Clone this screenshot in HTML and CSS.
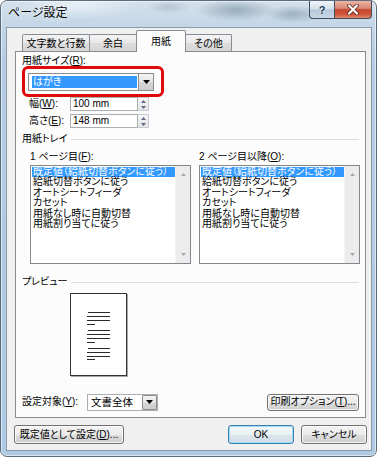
FILE: index.html
```html
<!DOCTYPE html>
<html lang="ja">
<head>
<meta charset="utf-8">
<title>ページ設定</title>
<link rel="stylesheet" href="styles.css">
</head>
<body>
<div class="window">
  <div class="titlebar">
    <span class="title">ページ設定</span>
    <div class="caps">
      <div class="cap help">?</div>
      <div class="cap close">
        <svg width="14" height="11" viewBox="0 0 14 11"><path d="M3 1.5L11 9.5M11 1.5L3 9.5" stroke="#5a2216" stroke-width="3.8" stroke-linecap="round"/><path d="M3 1.5L11 9.5M11 1.5L3 9.5" stroke="#ffffff" stroke-width="2.2" stroke-linecap="round"/></svg>
      </div>
    </div>
  </div>
  <div class="client">
    <div class="tabctl">
      <div class="tabs">
        <div class="tab t1">文字数と行数</div>
        <div class="tab t2">余白</div>
        <div class="tab t3 active">用紙</div>
        <div class="tab t4">その他</div>
      </div>
      <div class="panel">
        <div class="lbl-size">用紙サイズ(<u>R</u>):</div>
        <div class="redbox">
          <div class="combo">
            <div class="hl">はがき</div>
            <div class="dd"><svg width="7" height="4" viewBox="0 0 7 4"><path d="M0 0H7L3.5 4Z" fill="#000"/></svg></div>
          </div>
        </div>
        <div class="spin-row">
          <span class="spin-lbl">幅(<u>W</u>):</span>
          <div class="field">100 mm</div>
          <div class="spin"><svg width="5" height="3" viewBox="0 0 5 3"><path d="M0 3H5L2.5 0Z" fill="#5a6a88"/></svg><svg width="5" height="3" viewBox="0 0 5 3"><path d="M0 0H5L2.5 3Z" fill="#5a6a88"/></svg></div>
        </div>
        <div class="spin-row">
          <span class="spin-lbl">高さ(<u>E</u>):</span>
          <div class="field">148 mm</div>
          <div class="spin"><svg width="5" height="3" viewBox="0 0 5 3"><path d="M0 3H5L2.5 0Z" fill="#5a6a88"/></svg><svg width="5" height="3" viewBox="0 0 5 3"><path d="M0 0H5L2.5 3Z" fill="#5a6a88"/></svg></div>
        </div>
        <div class="group">用紙トレイ</div>
        <div class="tray-labels">
          <span class="tl1">1 ページ目(<u>F</u>):</span>
          <span>2 ページ目以降(<u>O</u>):</span>
        </div>
        <div class="lists">
          <div class="list">
            <div class="items">
              <div class="item sel">既定値（給紙切替ボタンに従う）</div>
              <div class="item">給紙切替ボタンに従う</div>
              <div class="item">オートシートフィーダ</div>
              <div class="item">カセット</div>
              <div class="item">用紙なし時に自動切替</div>
              <div class="item">用紙割り当てに従う</div>
            </div>
            <div class="sb"><svg width="5" height="3" viewBox="0 0 5 3"><path d="M0 3H5L2.5 0Z" fill="#a8a8a8"/></svg><svg width="5" height="3" viewBox="0 0 5 3"><path d="M0 0H5L2.5 3Z" fill="#a8a8a8"/></svg></div>
          </div>
          <div class="list">
            <div class="items">
              <div class="item sel">既定値（給紙切替ボタンに従う）</div>
              <div class="item">給紙切替ボタンに従う</div>
              <div class="item">オートシートフィーダ</div>
              <div class="item">カセット</div>
              <div class="item">用紙なし時に自動切替</div>
              <div class="item">用紙割り当てに従う</div>
            </div>
            <div class="sb"><svg width="5" height="3" viewBox="0 0 5 3"><path d="M0 3H5L2.5 0Z" fill="#a8a8a8"/></svg><svg width="5" height="3" viewBox="0 0 5 3"><path d="M0 0H5L2.5 3Z" fill="#a8a8a8"/></svg></div>
          </div>
        </div>
        <div class="group preview">プレビュー</div>
        <div class="page">
          <svg width="55" height="81" viewBox="0 0 55 81">
            <g fill="#2a2a2a">
              <rect x="17" y="18" width="22" height="1"/>
              <rect x="16" y="22" width="23" height="1"/>
              <rect x="16" y="26" width="23" height="1"/>
              <rect x="16" y="30" width="8" height="1"/>
              <rect x="17" y="36" width="22" height="1"/>
              <rect x="16" y="40" width="23" height="1"/>
              <rect x="16" y="44" width="23" height="1"/>
              <rect x="16" y="48" width="8" height="1"/>
              <rect x="17" y="54" width="22" height="1"/>
              <rect x="16" y="58" width="23" height="1"/>
              <rect x="16" y="62" width="23" height="1"/>
              <rect x="16" y="65" width="8" height="1"/>
            </g>
          </svg>
        </div>
        <div class="target-row">
          <span class="target-lbl">設定対象(<u>Y</u>):</span>
          <div class="combo2">
            <span class="c2text">文書全体</span>
            <div class="dd2"><svg width="7" height="4" viewBox="0 0 7 4"><path d="M0 0H7L3.5 4Z" fill="#000"/></svg></div>
          </div>
          <div class="btn print-btn">印刷オプション(<u>T</u>)...</div>
        </div>
      </div>
    </div>
    <div class="footer">
      <div class="btn def-btn">既定値として設定(<u>D</u>)...</div>
      <div class="btn ok-btn">OK</div>
      <div class="btn cancel-btn">キャンセル</div>
    </div>
  </div>
</div>
</body>
</html>
```

FILE: styles.css
```css
* { box-sizing: border-box; }
html, body { margin: 0; padding: 0; background: #ffffff; }
body {
  font-family: "Liberation Sans", "Noto Sans CJK JP", sans-serif;
  font-size: 10px;
  color: #000;
  font-feature-settings: "palt";
}
u { text-underline-offset: 1px; }

.window {
  width: 377px;
  height: 457px;
  border: 1px solid #5b6c7c;
  border-radius: 7px;
  padding: 0 4px 5px 5px;
  display: flex;
  flex-direction: column;
  box-shadow: inset 0 0 0 1px rgba(255,255,255,0.55);
  background:
    radial-gradient(ellipse 40px 11px at 235px 9px, rgba(110,132,152,0.55), transparent),
    radial-gradient(ellipse 28px 9px at 292px 13px, rgba(110,132,152,0.5), transparent),
    radial-gradient(ellipse 22px 7px at 168px 6px, rgba(130,150,170,0.35), transparent),
    radial-gradient(ellipse 60px 14px at 80px 4px, rgba(255,255,255,0.5), transparent),
    linear-gradient(#d4e1eb, #c2d6e7 26px, #b4cde4 60px, #afc9e2);
}

.titlebar {
  height: 26px;
  display: flex;
  align-items: flex-start;
}
.title {
  font-size: 12px;
  line-height: 14px;
  margin: 5px 0 0 2px;
  text-shadow: 0 0 6px rgba(255,255,255,0.9);
}
.caps {
  display: flex;
  margin-left: auto;
}
.cap {
  height: 18px;
  border: 1px solid #3e4e60;
  border-top: 0;
  display: flex;
  align-items: center;
  justify-content: center;
}
.help {
  width: 26px;
  border-radius: 0 0 0 4px;
  background: linear-gradient(#eef3f8, #d6e1eb 45%, #b6c8da 52%, #c9d8e6);
  font-weight: bold;
  font-size: 11px;
  color: #223a55;
  text-shadow: 0 0 2px #fff;
}
.close {
  width: 38px;
  margin-left: -1px;
  border-radius: 0 0 4px 0;
  background: linear-gradient(#ebb4a6, #d98a75 42%, #c4472d 52%, #cf5439 78%, #e08a6f);
}

.client {
  flex: 1;
  border: 1px solid #8a9bab;
  background: #f0f0f0;
  display: flex;
  flex-direction: column;
  padding: 0 4px 0 7px;
}

.tabctl { margin: 0 1px 0 1px; }
.tabs {
  height: 23px;
  display: flex;
  align-items: flex-end;
  padding: 2px 0 0 7px;
}
.tab {
  height: 17px;
  border: 1px solid #898c95;
  border-bottom: 0;
  border-radius: 2px 2px 0 0;
  background: linear-gradient(#f4f4f4, #e8e8e8 50%, #dcdcdc 52%, #d7d7d7);
  text-align: center;
  line-height: 12px;
  padding-top: 3px;
  white-space: nowrap;
}
.t1 { width: 68px; }
.t2 { width: 48px; margin-left: -1px; }
.t3 { width: 50px; margin-left: -1px; }
.t4 { width: 47px; margin-left: -1px; }
.tab.active {
  height: 22px;
  margin-bottom: -1px;
  background: #fcfcfc;
  position: relative;
  z-index: 1;
  padding-top: 5px;
}

.panel {
  height: 367px;
  border: 1px solid #898c95;
  background: #fcfcfc;
}

.lbl-size {
  margin: 3px 0 0 6px;
  line-height: 12px;
  height: 12px;
}
.redbox {
  margin: -1px 0 0 6px;
  width: 142px;
  height: 31px;
  border: 3px solid #e10a0a;
  border-radius: 6px;
  padding: 4px 0 0 3px;
}
.combo {
  width: 126px;
  height: 18px;
  border: 1px solid #8c8c8c;
  background: #fff;
  display: flex;
}
.hl {
  flex: 1;
  margin: 2px 1px 2px 3px;
  background: #3399ff;
  color: #fff;
  line-height: 12px;
  padding-left: 1px;
}
.dd {
  width: 15px;
  border-left: 1px solid #8c8c8c;
  background: linear-gradient(#f3f3f3, #e6e6e6 50%, #d6d6d6 52%, #cdcdcd);
  display: flex;
  align-items: center;
  justify-content: center;
}

.spin-row {
  display: flex;
  align-items: center;
  height: 14px;
  margin-left: 13px;
}
.spin-row + .spin-row { margin-top: 3px; }
.spin-lbl { width: 41px; line-height: 12px; }
.field {
  width: 68px;
  height: 14px;
  border: 1px solid #abadb3;
  background: #fff;
  line-height: 12px;
  padding-left: 2px;
}
.spin {
  width: 11px;
  height: 14px;
  border: 1px solid #c9cbd0;
  border-left: 0;
  background: linear-gradient(#f6f6f6, #e4e4e4);
  display: flex;
  flex-direction: column;
  align-items: center;
  justify-content: space-around;
}

.group {
  display: flex;
  align-items: center;
  margin: 5px 0 0 6px;
  line-height: 12px;
  height: 12px;
}
.group::after {
  content: "";
  flex: 1;
  height: 1px;
  background: #d5dfe5;
  margin: 0 6px 0 4px;
}
.group.preview { margin-top: 12px; }

.tray-labels {
  display: flex;
  margin: 6px 0 0 14px;
  line-height: 12px;
  height: 12px;
}
.tl1 { width: 169px; }
.lists {
  display: flex;
  gap: 8px;
  margin: 2px 0 0 14px;
}
.list {
  width: 161px;
  height: 99px;
  border: 1px solid #828790;
  background: #fff;
  display: flex;
}
.items {
  flex: 1;
  padding: 1px 0 0 1px;
  overflow: hidden;
}
.item {
  height: 10.4px;
  line-height: 10.4px;
  padding-left: 1px;
  white-space: nowrap;
}
.item.sel { background: #3399ff; color: #fff; }
.sb {
  width: 15px;
  background: #ececec;
  border-left: 1px solid #f4f4f4;
  display: flex;
  flex-direction: column;
  align-items: center;
  justify-content: space-between;
  padding: 7px 0 7px;
}

.page {
  margin: 5px 0 0 54px;
  width: 57px;
  height: 83px;
  border: 1px solid #333;
  background: #fff;
  box-shadow: 1px 1px 0 #a8a8a8;
}
.page svg { display: block; }

.target-row {
  display: flex;
  align-items: center;
  margin: 17px 0 0 6px;
  height: 18px;
}
.target-lbl { width: 65px; line-height: 12px; }
.combo2 {
  width: 71px;
  height: 17px;
  border: 1px solid #abadb3;
  background: #fff;
  display: flex;
  align-items: center;
}
.c2text { flex: 1; padding-left: 3px; line-height: 12px; font-size: 10.5px; }
.dd2 {
  width: 15px;
  height: 15px;
  border: 1px solid #8c8c8c;
  border-radius: 1px;
  margin-right: 0;
  background: linear-gradient(#f3f3f3, #e6e6e6 50%, #d6d6d6 52%, #cdcdcd);
  display: flex;
  align-items: center;
  justify-content: center;
}

.btn {
  height: 17px;
  border: 1px solid #707070;
  border-radius: 3px;
  background: linear-gradient(#f2f2f2, #ebebeb 50%, #dddddd 52%, #cfcfcf);
  box-shadow: inset 0 0 0 1px rgba(255,255,255,0.8);
  display: flex;
  align-items: center;
  justify-content: center;
  line-height: 12px;
  white-space: nowrap;
}
.print-btn { width: 92px; margin: 0 6px 0 auto; }

.footer {
  display: flex;
  margin-top: 7px;
  height: 19px;
}
.footer .btn { height: 19px; }
.def-btn { width: 110px; }
.ok-btn {
  width: 66px;
  margin-left: auto;
  border-color: #3c7fb1;
  box-shadow: inset 0 0 0 1px #9fdcf7;
  background: linear-gradient(#f3f8fb, #eaf1f5 50%, #dbe5ec 52%, #d2dde5);
}
.cancel-btn { width: 66px; margin-left: 7px; }
```
